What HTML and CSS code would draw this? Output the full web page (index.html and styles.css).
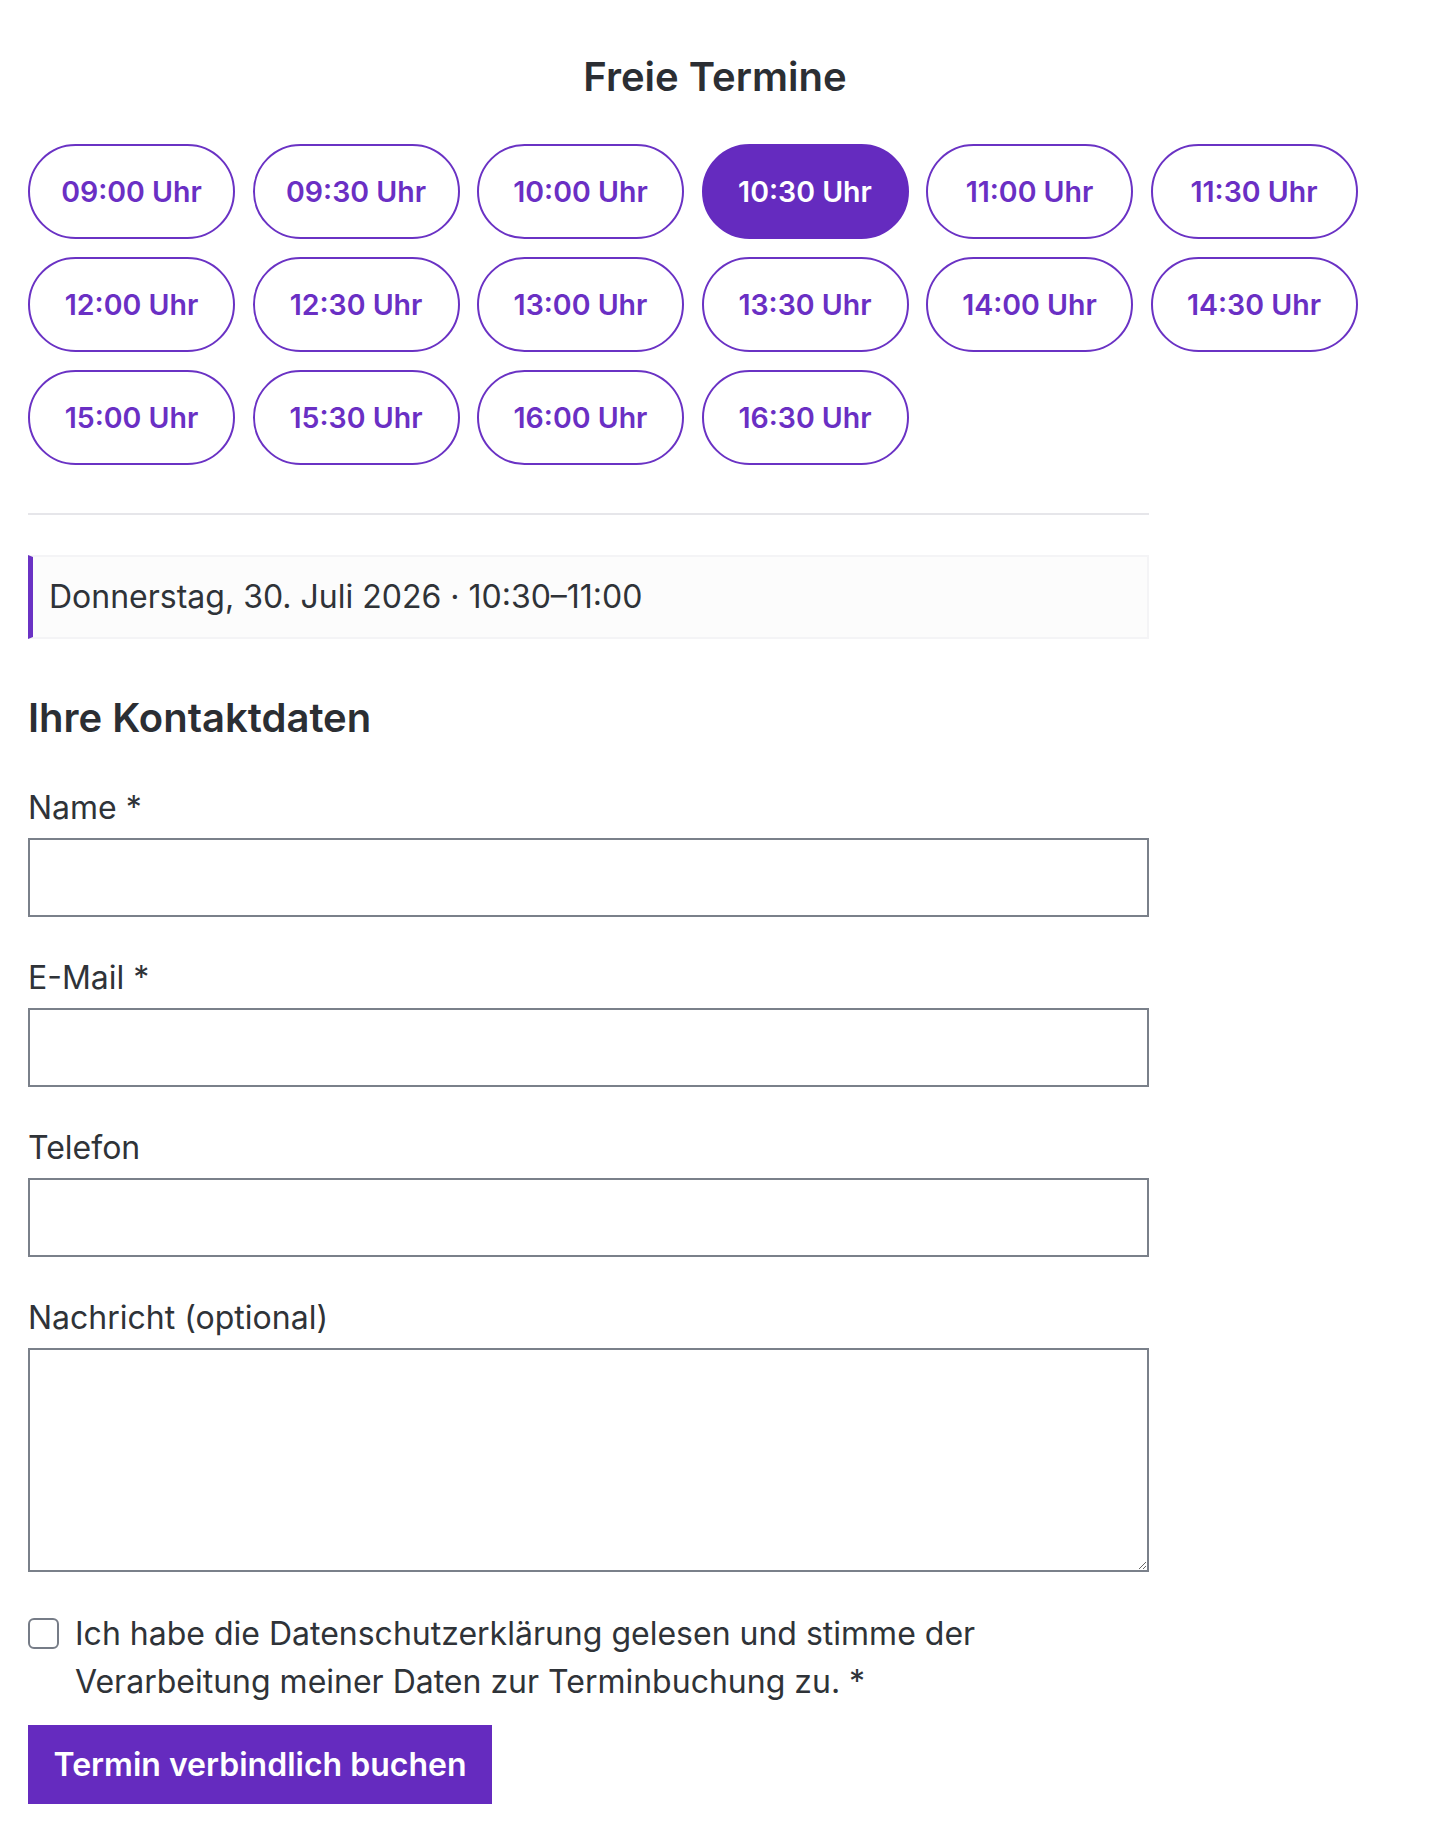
FILE: index.html
```html
<!DOCTYPE html>
<html lang="de">
<head>
<meta charset="utf-8">
<title>Freie Termine</title>
<link rel="stylesheet" href="styles.css">
</head>
<body>
<main class="page">
  <h2 class="title">Freie Termine</h2>
  <div class="slots">
    <button class="slot">09:00 Uhr</button>
    <button class="slot">09:30 Uhr</button>
    <button class="slot">10:00 Uhr</button>
    <button class="slot slot-active">10:30 Uhr</button>
    <button class="slot">11:00 Uhr</button>
    <button class="slot">11:30 Uhr</button>
    <button class="slot">12:00 Uhr</button>
    <button class="slot">12:30 Uhr</button>
    <button class="slot">13:00 Uhr</button>
    <button class="slot">13:30 Uhr</button>
    <button class="slot">14:00 Uhr</button>
    <button class="slot">14:30 Uhr</button>
    <button class="slot">15:00 Uhr</button>
    <button class="slot">15:30 Uhr</button>
    <button class="slot">16:00 Uhr</button>
    <button class="slot">16:30 Uhr</button>
  </div>
  <section class="booking">
    <hr class="divider">
    <div class="summary">Donnerstag, 30. Juli 2026 · 10:30–11:00</div>
    <h3 class="subtitle">Ihre Kontaktdaten</h3>
    <form class="form">
      <div class="field">
        <label class="label" for="name">Name *</label>
        <input class="input" id="name" type="text">
      </div>
      <div class="field">
        <label class="label" for="email">E-Mail *</label>
        <input class="input" id="email" type="email">
      </div>
      <div class="field">
        <label class="label" for="tel">Telefon</label>
        <input class="input" id="tel" type="tel">
      </div>
      <div class="field">
        <label class="label" for="msg">Nachricht (optional)</label>
        <textarea class="input textarea" id="msg"></textarea>
      </div>
      <label class="consent">
        <span class="checkbox"></span>
        <span class="consent-text">Ich habe die Datenschutzerklärung gelesen und stimme der Verarbeitung meiner Daten zur Terminbuchung zu. *</span>
      </label>
      <button type="button" class="submit">Termin verbindlich buchen</button>
    </form>
  </section>
</main>
</body>
</html>
```
FILE: styles.css
```css
* { box-sizing: border-box; }

html, body {
  margin: 0;
  padding: 0;
  background: #ffffff;
}

body {
  font-family: Inter, "Noto Sans", "Liberation Sans", sans-serif;
  color: #2b2e33;
  font-size: 32px;
  line-height: 1.5;
}

.page {
  padding: 0 28px 28px;
}

.title {
  margin: 0;
  padding-top: 52px;
  text-align: center;
  font-size: 40px;
  line-height: 50px;
  font-weight: 600;
  color: #2b2e33;
}

.slots {
  margin-top: 42px;
  display: flex;
  flex-wrap: wrap;
  gap: 18px 17.5px;
}

.slot {
  width: 207px;
  height: 95px;
  border: 2px solid #6a32c4;
  border-radius: 48px;
  background: #ffffff;
  color: #6a2fc4;
  font-family: Inter, "Noto Sans", "Liberation Sans", sans-serif;
  font-size: 28.5px;
  font-weight: 600;
  padding: 0;
  cursor: pointer;
}

.slot-active {
  background: #652bbf;
  border-color: #652bbf;
  color: #ffffff;
}

.booking {
  max-width: 1121px;
}

.divider {
  margin: 48px 0 0;
  border: 0;
  height: 2px;
  background: #e6e6ea;
}

.summary {
  margin-top: 40px;
  height: 84px;
  display: flex;
  align-items: center;
  padding-left: 16px;
  background: #fcfcfc;
  border: 2px solid #f4f4f6;
  border-left: 5px solid #6a32c4;
  color: #2f3338;
  font-size: 32px;
}

.subtitle {
  margin: 55px 0 0;
  font-size: 40px;
  line-height: 48px;
  font-weight: 600;
  color: #2b2e33;
}

.form {
  margin-top: 45px;
  display: flex;
  flex-direction: column;
}

.field {
  display: flex;
  flex-direction: column;
  gap: 9px;
  margin-bottom: 40px;
}

.label {
  font-size: 32px;
  line-height: 42px;
  color: #2f3338;
}

.input {
  height: 79px;
  width: 100%;
  border: 2px solid #7a808a;
  border-radius: 0;
  background: #ffffff;
  font-family: inherit;
  font-size: 32px;
  padding: 0 16px;
}

.textarea {
  height: 224px;
  resize: vertical;
  padding: 12px 16px;
}

.consent {
  margin-top: -2px;
  display: flex;
  align-items: flex-start;
  gap: 16px;
  font-size: 32px;
  line-height: 48px;
  color: #2f3338;
}

.checkbox {
  flex: none;
  width: 31px;
  height: 31px;
  margin-top: 8px;
  border: 2px solid #767c87;
  border-radius: 6px;
  background: #ffffff;
}

.consent-text {
  max-width: 1000px;
}

.submit {
  margin-top: 19px;
  align-self: flex-start;
  width: 464px;
  height: 79px;
  border: 0;
  border-radius: 0;
  background: #652bbf;
  color: #ffffff;
  font-family: inherit;
  font-size: 32px;
  font-weight: 600;
  cursor: pointer;
}
```
